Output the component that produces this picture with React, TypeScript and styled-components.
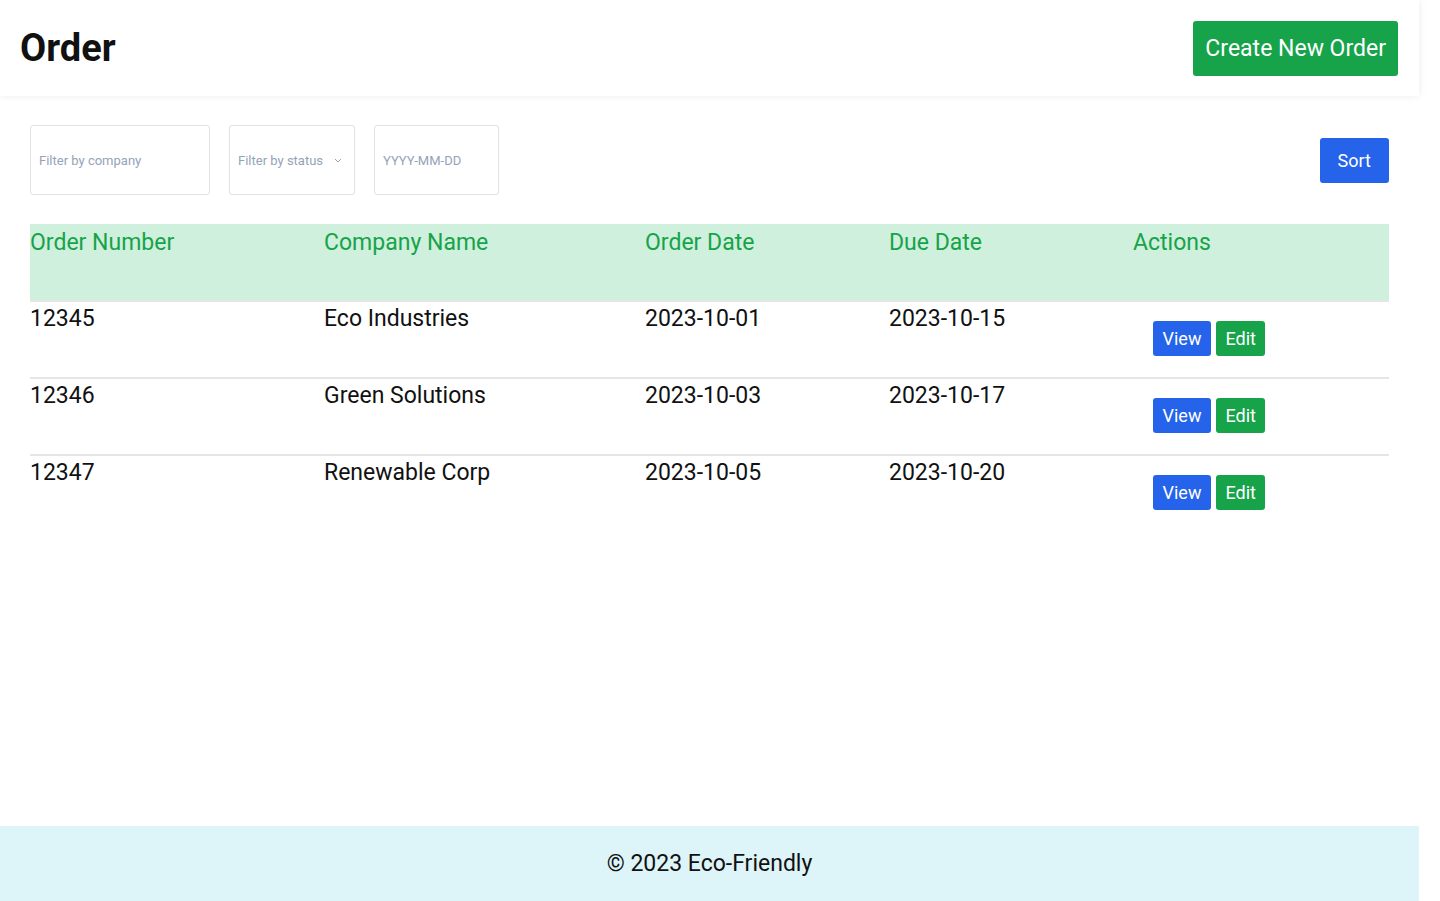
import React from 'react';
import styled, { createGlobalStyle } from 'styled-components';

const GlobalStyle = createGlobalStyle`
  html, body {
    margin: 0;
    padding: 0;
    background: #fff;
    font-family: Roboto, "Liberation Sans", sans-serif;
    color: #111;
  }
  * { box-sizing: border-box; }
`;

const StyledPage = styled.div`
  display: flex;
  flex-direction: column;
  min-height: 901px;
  width: 1419px;
`;

const StyledHeader = styled.header`
  align-items: center;
  background: #fff;
  box-shadow: 0 0 8px rgba(0, 0, 0, 0.08);
  display: flex;
  height: 96px;
  justify-content: space-between;
  padding: 0 21px 0 20px;
`;

const StyledTitle = styled.h1`
  font-size: 38px;
  font-weight: 700;
  margin: 0;
`;

const StyledButton = styled.button<{ $variant: 'green' | 'blue'; $size: 'lg' | 'md' | 'sm' }>`
  background: ${({ $variant }) => ($variant === 'green' ? '#16a34a' : '#2563eb')};
  border: none;
  border-radius: 3px;
  color: #fff;
  cursor: pointer;
  font-family: inherit;
  font-size: ${({ $size }) => ($size === 'lg' ? '23px' : '18px')};
  height: ${({ $size }) => ($size === 'lg' ? '55px' : $size === 'md' ? '45px' : '35px')};
  padding: ${({ $size }) => ($size === 'lg' ? '0 12px' : $size === 'md' ? '0 18px' : '0 9.5px')};
`;

const StyledMain = styled.main`
  flex: 1;
  padding: 29px 30px 0;
`;

const StyledFilterBar = styled.div`
  align-items: center;
  display: flex;
  gap: 19px;
  margin-bottom: 29px;
`;

const StyledField = styled.div<{ $width: number }>`
  align-items: center;
  border: 1px solid #e2e2e2;
  border-radius: 3px;
  color: #94a3b8;
  display: flex;
  font-size: 13px;
  height: 70px;
  justify-content: space-between;
  padding: 0 12px 0 8px;
  width: ${({ $width }) => $width}px;
`;

const StyledSpacer = styled.div`
  flex: 1;
`;

const StyledTable = styled.div`
  width: 1359px;
`;

const StyledRow = styled.div<{ $head?: boolean; $last?: boolean }>`
  background: ${({ $head }) => ($head ? '#cff0dc' : 'transparent')};
  border-bottom: ${({ $last }) => ($last ? 'none' : '2px solid #e5e5e5')};
  color: ${({ $head }) => ($head ? '#16a34a' : '#111')};
  display: grid;
  font-size: 23px;
  grid-template-columns: 294px 321px 244px 244px 256px;
  height: ${({ $head }) => ($head ? '78px' : '77px')};
`;

const StyledCell = styled.div<{ $head?: boolean }>`
  line-height: 27px;
  padding-top: ${({ $head }) => ($head ? '5px' : '3px')};
`;

const StyledActions = styled.div`
  display: flex;
  gap: 5px;
  padding: 19px 0 0 20px;
`;

const StyledFooter = styled.footer`
  align-items: center;
  background: #ddf5f8;
  display: flex;
  font-size: 23px;
  height: 75px;
  justify-content: center;
`;

const orders = [
  { id: '12345', company: 'Eco Industries', date: '2023-10-01', due: '2023-10-15' },
  { id: '12346', company: 'Green Solutions', date: '2023-10-03', due: '2023-10-17' },
  { id: '12347', company: 'Renewable Corp', date: '2023-10-05', due: '2023-10-20' },
];

const Chevron = () => (
  <svg width="8" height="5" viewBox="0 0 8 5" fill="none">
    <path d="M1 1l3 3 3-3" stroke="#94a3b8" strokeWidth="1" />
  </svg>
);

export default function App() {
  return (
    <>
      <GlobalStyle />
      <StyledPage>
        <StyledHeader>
          <StyledTitle>Order</StyledTitle>
          <StyledButton $variant="green" $size="lg">Create New Order</StyledButton>
        </StyledHeader>
        <StyledMain>
          <StyledFilterBar>
            <StyledField $width={180}>Filter by company</StyledField>
            <StyledField $width={126}>
              Filter by status
              <Chevron />
            </StyledField>
            <StyledField $width={125}>YYYY-MM-DD</StyledField>
            <StyledSpacer />
            <StyledButton $variant="blue" $size="md">Sort</StyledButton>
          </StyledFilterBar>
          <StyledTable>
            <StyledRow $head>
              <StyledCell $head>Order Number</StyledCell>
              <StyledCell $head>Company Name</StyledCell>
              <StyledCell $head>Order Date</StyledCell>
              <StyledCell $head>Due Date</StyledCell>
              <StyledCell $head>Actions</StyledCell>
            </StyledRow>
            {orders.map((o, i) => (
              <StyledRow key={o.id} $last={i === orders.length - 1}>
                <StyledCell>{o.id}</StyledCell>
                <StyledCell>{o.company}</StyledCell>
                <StyledCell>{o.date}</StyledCell>
                <StyledCell>{o.due}</StyledCell>
                <StyledActions>
                  <StyledButton $variant="blue" $size="sm">View</StyledButton>
                  <StyledButton $variant="green" $size="sm">Edit</StyledButton>
                </StyledActions>
              </StyledRow>
            ))}
          </StyledTable>
        </StyledMain>
        <StyledFooter>© 2023 Eco-Friendly</StyledFooter>
      </StyledPage>
    </>
  );
}
